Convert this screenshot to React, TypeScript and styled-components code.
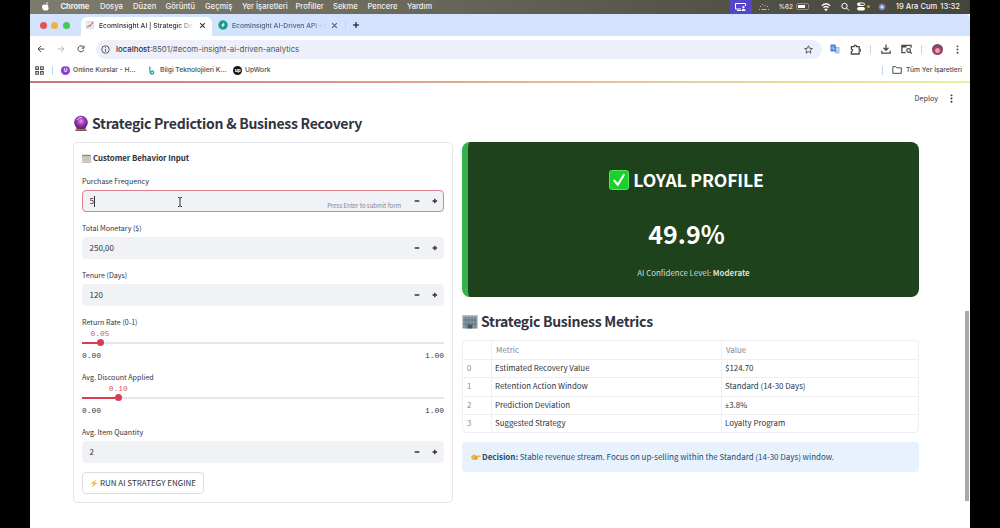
import { ReactNode } from "react";
import styled, { createGlobalStyle } from "styled-components";

const GlobalStyle = createGlobalStyle`
  * {
    box-sizing: border-box;
  }

  body {
    margin: 0;
    background: #000;
    overflow: hidden;
  }
`;

const uiFont = `Inter, "Liberation Sans", sans-serif`;
const appFont = `"Noto Sans CJK SC", "Noto Sans", sans-serif`;
const monoFont = `"Liberation Mono", monospace`;

const Screen = styled.div`
  width: 940px;
  height: 528px;
  margin: 0 30px;
  display: flex;
  flex-direction: column;
  background: #fff;
  font-family: ${uiFont};
  white-space: nowrap;
  overflow: hidden;
`;

const Text = styled.span<{ $width?: number; $spacing?: number }>`
  flex: none;
  width: ${({ $width }) => ($width ? `${$width}px` : "auto")};
  letter-spacing: ${({ $spacing }) => $spacing ?? 0}px;
`;

/* system menu bar */

const MenuBar = styled.div`
  height: 14px;
  flex: none;
  display: flex;
  align-items: center;
  padding: 0 10px 1px 12px;
  background: linear-gradient(90deg, #7d7b6e 0%, #6d6c5e 35%, #57574b 65%, #44453c 100%);
  color: #f2f2ee;
  font-size: 7.6px;
  font-weight: 500;
`;

const AppName = styled(Text)`
  font-weight: 700;
`;

const StatusArea = styled.div`
  margin-left: auto;
  display: flex;
  align-items: center;
  height: 14px;
`;

const ScreenShare = styled.div`
  width: 22px;
  height: 14px;
  margin-right: 7px;
  display: flex;
  align-items: center;
  justify-content: center;
  background: #5546c8;
`;

const Percent = styled(Text)`
  font-size: 6.4px;
`;

const Battery = styled.div`
  width: 13px;
  height: 7px;
  margin: 0 12px 0 3px;
  padding: 1px;
  border: 1px solid #8b8b83;
  border-radius: 2px;

  &::before {
    content: "";
    display: block;
    width: 7px;
    height: 100%;
    background: #fff;
  }
`;

const OrangeDot = styled.i`
  width: 3px;
  height: 3px;
  margin: 0 8px 0 2px;
  border-radius: 50%;
  background: #e08d28;
`;

const Siri = styled.i`
  width: 8px;
  height: 8px;
  margin-right: 10px;
  border-radius: 50%;
  background: radial-gradient(circle, #fff 5%, #58b9d8 30%, #a34674 60%, #26303c 85%);
`;

/* browser window */

const TabStrip = styled.div`
  height: 22px;
  flex: none;
  display: flex;
  align-items: flex-end;
  padding-left: 10px;
  background: #d3e3fd;
  border-radius: 0 5px 0 0;
`;

const Lights = styled.div`
  display: flex;
  gap: 4.4px;
  width: 41px;
  height: 22px;
  align-items: center;
`;

const Light = styled.i<{ $color: string }>`
  width: 7px;
  height: 7px;
  border-radius: 50%;
  background: ${({ $color }) => $color};
`;

const Tab = styled.div<{ $active?: boolean }>`
  width: ${({ $active }) => ($active ? 131 : 133)}px;
  height: 19px;
  display: flex;
  align-items: center;
  padding: 0 6px 3px ${({ $active }) => ($active ? 5 : 6)}px;
  gap: ${({ $active }) => ($active ? 5 : 4)}px;
  border-radius: 6px 6px 0 0;
  background: ${({ $active }) => ($active ? "#fff" : "transparent")};
  color: ${({ $active }) => ($active ? "#303238" : "#52617a")};
  font-size: 6.75px;
  font-weight: 500;
`;

const TabTitle = styled.span<{ $width: number }>`
  width: ${({ $width }) => $width}px;
  mask-image: linear-gradient(90deg, #000 84%, transparent);
`;

const TabEnd = styled.div`
  height: 22px;
  display: flex;
  align-items: center;
  gap: 6px;
`;

const Divider = styled.i<{ $height?: number }>`
  width: 1px;
  height: ${({ $height }) => $height ?? 9}px;
  background: #c3d5f1;
`;

const Toolbar = styled.div`
  height: 26px;
  flex: none;
  display: flex;
  align-items: center;
  padding: 0 8px 0 7px;
  color: #46484c;
`;

const NavButtons = styled.div`
  display: flex;
  gap: 12px;
  width: 60px;
`;

const Omnibox = styled.div`
  width: 726px;
  margin-left: -1px;
  height: 19px;
  display: flex;
  align-items: center;
  padding: 0 9px 0 5px;
  gap: 6px;
  border-radius: 10px;
  background: #edf0fa;
  color: #52555b;
  font-size: 7.82px;

  b {
    font-weight: 500;
    color: #2b2d31;
  }

  svg:last-child {
    margin-left: auto;
  }
`;

const Extensions = styled.div`
  margin-left: auto;
  display: flex;
  align-items: center;
  gap: 10px;
`;

const Avatar = styled.i`
  width: 11px;
  height: 11px;
  border-radius: 50%;
  background: radial-gradient(circle at 50% 60%, #e7a3ae 0 22%, #b43c57 35%, #66516c 70%);
`;

const Bookmarks = styled.div`
  height: 19px;
  flex: none;
  display: flex;
  align-items: center;
  padding: 0 8px 3px 5px;
  color: #4a4c50;
  font-size: 6.7px;
  font-weight: 500;
`;

const Bookmark = styled.div<{ $width: number }>`
  width: ${({ $width }) => $width}px;
  display: flex;
  align-items: center;
  gap: 3px;
`;

const Badge = styled.i<{ $color: string }>`
  width: 9px;
  height: 9px;
  flex: none;
  border-radius: 50%;
  background: ${({ $color }) => $color};
  color: #fff;
  font: 700 5px/9px ${uiFont};
  text-align: center;
  letter-spacing: -0.4px;
`;

const AllBookmarks = styled.div`
  margin-left: auto;
  display: flex;
  align-items: center;
  gap: 4px;
`;

/* dashboard */

const Decoration = styled.div`
  height: 2px;
  flex: none;
  background: linear-gradient(90deg, #c9747c 0%, #dc9a88 35%, #e8c79c 65%, #eaf0a0 100%);
`;

const Page = styled.main`
  flex: 1;
  display: flex;
  font-family: ${appFont};
  color: #31333f;
  background: #fff;
`;

const Content = styled.div`
  width: 846px;
  margin-left: 43px;
  display: flex;
  flex-direction: column;
`;

const DeployBar = styled.div`
  height: 31px;
  width: 883px;
  padding-bottom: 1px;
  display: flex;
  align-items: center;
  justify-content: flex-end;
  gap: 9px;
  font-size: 7.2px;
`;

const Heading = styled.h3`
  margin: 0;
  height: 20px;
  padding-bottom: 2px;
  display: flex;
  align-items: center;
  gap: 3px;
  font-size: 14px;
  line-height: 18px;
  font-weight: 600;
`;

const Columns = styled.div`
  display: flex;
  gap: 9px;
  margin-top: 8px;
`;

const Form = styled.form`
  width: 380px;
  height: 361px;
  flex: none;
  display: flex;
  flex-direction: column;
  gap: 9px;
  padding: 8px;
  border: 1px solid #e4e5e9;
  border-radius: 5px;
`;

const FormTitle = styled.div`
  height: 14px;
  display: flex;
  align-items: center;
  gap: 2px;
  font-size: 7.9px;
  line-height: 14px;
  font-weight: 700;
`;

const Label = styled.div`
  height: 14px;
  font-size: 7.1px;
  line-height: 14px;
`;

const InputBox = styled.div<{ $focused?: boolean }>`
  height: 22px;
  margin-top: 2px;
  display: flex;
  align-items: center;
  padding: 0 4px 0 6.5px;
  border: 1px solid ${({ $focused }) => ($focused ? "#db7f8e" : "#f0f2f6")};
  border-radius: 4px;
  background: #f0f2f6;
  font-size: 8px;
  line-height: 20px;
`;

const Caret = styled.i`
  width: 1px;
  height: 11px;
  background: #31333f;
`;

const IBeam = styled.svg`
  margin: 2px 0 0 82px;
`;

const Hint = styled.span`
  margin: 9px 12px 0 auto;
  color: #84868e;
  font-size: 6px;
  letter-spacing: -0.02px;
  line-height: 10px;
`;

const Steppers = styled.svg<{ $push?: boolean }>`
  flex: none;
  margin-left: ${({ $push }) => ($push ? "auto" : 0)};
`;

const SliderField = styled.div`
  height: 46px;
`;

const Thumb = styled.div`
  width: 20px;
  margin-left: -10px;
  height: 9px;
  color: #d6536a;
  font: 7.9px/9px ${monoFont};
  text-align: center;
`;

const Track = styled.div`
  height: 9px;
  display: flex;
  align-items: center;

  &::after {
    content: "";
    flex: 1;
    height: 2px;
    background: #e4e6ec;
  }
`;

const Fill = styled.i`
  height: 2px;
  display: flex;
  align-items: center;
  justify-content: flex-end;
  background: #dc3c50;

  &::after {
    content: "";
    width: 7px;
    height: 7px;
    flex: none;
    margin-right: -3.5px;
    border-radius: 50%;
    background: #dc3c50;
    z-index: 1;
  }
`;

const Range = styled.div`
  display: flex;
  justify-content: space-between;
  margin-top: 3px;
  font: 7.9px/12px ${monoFont};
`;

const RunButton = styled.button`
  width: 122px;
  height: 22px;
  padding: 0;
  display: flex;
  align-items: center;
  justify-content: center;
  gap: 2px;
  border: 1px solid #dcdde1;
  border-radius: 4px;
  background: #fff;
  color: #31333f;
  font: 8px/20px ${appFont};
`;

const Results = styled.div`
  width: 457px;
  display: flex;
  flex-direction: column;
`;

const ProfileCard = styled.div`
  height: 155px;
  padding-top: 24px;
  display: flex;
  flex-direction: column;
  align-items: center;
  border-left: 6px solid #35b24a;
  border-radius: 8px;
  background: #1e421b;
  color: #fff;
`;

const ProfileName = styled.div`
  height: 28px;
  margin-right: 14px;
  display: flex;
  align-items: center;
  gap: 4px;
  font-size: 17.6px;
  line-height: 28px;
  font-weight: 600;
`;

const Score = styled.div`
  margin: 21px 14px 0 0;
  font-size: 25px;
  line-height: 36px;
  font-weight: 700;
`;

const Confidence = styled.div`
  margin-top: 15px;
  color: #d6dfd5;
  font-size: 7.9px;
  line-height: 14px;
`;

const MetricsHeading = styled(Heading)`
  margin-top: 15px;
`;

const Table = styled.div`
  height: 93px;
  margin-top: 8px;
  display: grid;
  grid-template-rows: repeat(5, 1fr);
  border: 1px solid #eeeff2;
  border-radius: 4px;
`;

const Row = styled.div<{ $head?: boolean }>`
  display: grid;
  grid-template-columns: 28px 230px 1fr;
  align-items: center;
  color: ${({ $head }) => ($head ? "#868890" : "#31333f")};
  font-size: 7.9px;
  line-height: 17px;
  border-top: ${({ $head }) => ($head ? 0 : 1)}px solid #eeeff2;

  span {
    height: 100%;
    padding-left: ${({ $head }) => ($head ? 4 : 3)}px;
    border-left: 1px solid #eeeff2;
    line-height: ${({ $head }) => ($head ? 18 : 16.5)}px;
  }

  span:first-child {
    padding-left: 4px;
    border-left: 0;
    color: #8b8d95;
  }
`;

const Sign = styled.i`
  font-family: "Open Sans", sans-serif;
  font-style: normal;
  font-size: 7.2px;
  line-height: 1;
`;

const Info = styled.div`
  height: 30px;
  margin-top: 9px;
  padding-left: 9px;
  display: flex;
  align-items: center;
  gap: 1px;
  border-radius: 4px;
  background: #e7f2fc;
  color: #1d4a73;
  font-size: 7.98px;
  line-height: 14px;
`;

const Scrollbar = styled.div`
  width: 4px;
  height: 190px;
  margin: 228px 1px 0 auto;
  background: #a9a9ab;
`;

function Icon({ size = 10, width = 1.2, children }: { size?: number; width?: number; children: ReactNode }) {
  return (
    <svg
      width={size}
      height={size}
      viewBox="0 0 12 12"
      fill="none"
      stroke="currentColor"
      strokeWidth={width}
      style={{ flex: "none" }}
    >
      {children}
    </svg>
  );
}

function CloseIcon() {
  return (
    <Icon size={7} width={1.8}>
      <path d="M2 2l8 8M10 2l-8 8" />
    </Icon>
  );
}

function DotsIcon() {
  return (
    <Icon size={9}>
      <g fill="currentColor" stroke="none">
        <circle cx="6" cy="1.8" r="1.3" />
        <circle cx="6" cy="6" r="1.3" />
        <circle cx="6" cy="10.2" r="1.3" />
      </g>
    </Icon>
  );
}

function NumberField({ label, value, focused }: { label: string; value: string; focused?: boolean }) {
  return (
    <div>
      <Label>{label}</Label>
      <InputBox $focused={focused}>
        {value}
        {focused && <Caret />}
        {focused && (
          <IBeam width="6" height="10" viewBox="0 0 6 10" fill="none" stroke="#333">
            <path d="M1 .5h1.3L3 1.2l.7-.7H5M1 9.5h1.3L3 8.8l.7.7H5M3 1v8" />
          </IBeam>
        )}
        {focused && <Hint>Press Enter to submit form</Hint>}
        <Steppers $push={!focused} width="26" height="8" viewBox="0 0 26 8" stroke="#31333f" strokeWidth="1.4">
          <path d="M1.7 4h4.6M19.500 4h4.600M21.800 1.700v4.600" />
        </Steppers>
      </InputBox>
    </div>
  );
}

function Slider({ label, value }: { label: string; value: number }) {
  const position = `${value * 100}%`;
  return (
    <SliderField>
      <Label>{label}</Label>
      <Thumb style={{ transform: `translateX(${value * 362}px)` }}>{value.toFixed(2)}</Thumb>
      <Track>
        <Fill style={{ width: position }} />
      </Track>
      <Range>
        <span>0.00</span>
        <span>1.00</span>
      </Range>
    </SliderField>
  );
}

const menuItems: [string, number][] = [
  ["Dosya", 33],
  ["Düzen", 32.5],
  ["Görüntü", 39.5],
  ["Geçmiş", 37],
  ["Yer İşaretleri", 53.5],
  ["Profiller", 37.5],
  ["Sekme", 34.5],
  ["Pencere", 39.5],
  ["Yardım", 30],
];

const metrics: [string, ReactNode][] = [
  ["Estimated Recovery Value", "$124.70"],
  ["Retention Action Window", "Standard (14-30 Days)"],
  [
    "Prediction Deviation",
    <>
      <Sign>±</Sign>3.8%
    </>,
  ],
  ["Suggested Strategy", "Loyalty Program"],
];

function SystemMenu() {
  return (
    <MenuBar>
      <svg width="18.5" height="9" viewBox="1 0 18.5 9" fill="#fff">
        <path d="M5.2 2.2C5 1.1 5.7.2 6.7 0c.1 1.2-.5 2-1.5 2.2zM7.5 3c-.8.5-.9 2.2.4 2.8C7.500 7.300 6.700 8.500 5.900 8.500c-.6 0-.7-.3-1.300-.3s-.8.3-1.300.3C2 8.500.700 5.900 1.100 4.100c.3-1.400 1.700-1.900 2.800-1.400.6.2.8.2 1.400 0C6.200 2.300 7.100 2.500 7.500 3z" />
      </svg>
      <AppName $width={39.5} $spacing={-0.1}>
        Chrome
      </AppName>
      {menuItems.map(([name, width]) => (
        <Text key={name} $width={width}>
          {name}
        </Text>
      ))}
      <StatusArea>
        <ScreenShare>
          <svg width="11" height="8" viewBox="0 0 11 8" fill="none" stroke="#fff">
            <path d="M6 6H.5V.5h10V3M2 7.500h4" />
            <circle cx="8.500" cy="4.200" r="1.100" fill="#fff" stroke="none" />
            <path d="M6.500 8c0-3 4-3 4 0z" fill="#fff" stroke="none" />
          </svg>
        </ScreenShare>
        <svg width="20" height="8" viewBox="0 0 20 8" fill="#b9b9b1">
          <path d="M0 6h1v1H0zM2.500 6h5v1h-5zM9 6h1v1H9zM1 3h1v1H1zM3 1h1v1H3zM5.500 2h1v1h-1zM8 3h1v1H8z" />
        </svg>
        <Percent $spacing={-0.1}>%62</Percent>
        <Battery />
        <Icon size={10} width={1.7}>
          <path d="M1 4.500c3-2.800 7-2.800 10 0M3 6.800c2-1.800 4-1.800 6 0M5 9l1 1 1-1c-.5-.6-1.500-.6-2 0z" />
        </Icon>
        <svg width="34" height="9" viewBox="0 0 34 9" fill="none" stroke="#fff">
          <circle cx="13.500" cy="4" r="2.700" />
          <path d="M15.500 6l2.500 2.500" />
          <rect x="26.500" y="1" width="7" height="2.500" rx="1.200" />
          <rect x="26.500" y="5.500" width="7" height="2.500" rx="1.200" fill="#fff" />
          <circle cx="28" cy="2.300" r="1" fill="#fff" />
        </svg>
        <OrangeDot />
        <Siri />
        <Text $width={44.5}>19 Ara Cum</Text>
        <Text>13:32</Text>
      </StatusArea>
    </MenuBar>
  );
}

function Browser() {
  return (
    <>
      <TabStrip>
        <Lights>
          <Light $color="#e9505a" />
          <Light $color="#eeb33c" />
          <Light $color="#43cb50" />
        </Lights>
        <Tab $active>
          <svg width="8" height="8" viewBox="0 0 8 8" fill="none">
            <path d="M.5.500h7v7h-7z" fill="#f0eff1" stroke="#c4c0c8" strokeWidth=".5" />
            <path d="M2.500.500v7M5 .500v7M.5 3h7M.5 5.500h7" stroke="#cbd7df" strokeWidth=".4" />
            <path d="M1 6.500l2-2 1 .800L7 1" stroke="#c64757" />
          </svg>
          <TabTitle $width={95}>EcomInsight AI | Strategic De</TabTitle>
          <CloseIcon />
        </Tab>
        <Tab>
          <svg width="10" height="10" viewBox="0 0 10 10" style={{ flex: "none" }}>
            <circle cx="5" cy="5" r="4.700" fill="#159c8a" />
            <path d="M6.700 1.800L3 5.400h1.700L3.500 8.200 7 4.600H5.300z" fill="#fff" />
          </svg>
          <TabTitle $width={95}>EcomInsight AI-Driven API - S</TabTitle>
          <CloseIcon />
        </Tab>
        <TabEnd>
          <Divider />
          <Icon size={8} width={1.5}>
            <path d="M6 1.500v9M1.500 6h9" />
          </Icon>
        </TabEnd>
      </TabStrip>
      <Toolbar>
        <NavButtons>
          <Icon size={8} width={1.5}>
            <path d="M11 6H1.500M6 1.500L1.500 6 6 10.500" />
          </Icon>
          <Icon size={8} width={1.5}>
            <path stroke="#b9babd" d="M1 6h9.500M6 1.500l4.500 4.500L6 10.500" />
          </Icon>
          <Icon size={8} width={1.5}>
            <path d="M10.300 7A4.500 4.500 0 1 1 9.500 3M10.500 1v3.700H6.800" />
          </Icon>
        </NavButtons>
        <Omnibox>
          <Icon size={9} width={1.3}>
            <circle cx="6" cy="6" r="5" />
            <path d="M6 5.500v3.300M6 3v1.300" />
          </Icon>
          <span>
            <b>localhost</b>:8501/#ecom-insight-ai-driven-analytics
          </span>
          <Icon size={9} width={1.3}>
            <path d="M6 1l1.500 3.400 3.700.3-2.800 2.400.9 3.700L6 8.800l-3.300 2 .9-3.700L.8 4.700l3.700-.3z" />
          </Icon>
        </Omnibox>
        <Extensions>
          <svg width="10" height="10" viewBox="0 0 10 10">
            <path d="M4 3h5.500v6.500H5z" fill="#a7bfe3" />
            <path d="M.5.500h5L7 7.500H.5z" fill="#467fe0" />
            <path d="M4.300 3.200a1.300 1.300 0 1 0 .2 1.300H3.300M6 5h2.500M7.200 4.500C7 6 6.500 7 5.800 7.500M6.500 6l1.500 1.700" fill="none" stroke="#fff" strokeWidth=".6" />
          </svg>
          <Icon size={11} width={1.4}>
            <path d="M1.500 2.800h3c-.2-2.200 2.700-2.200 2.500 0h3v2.900c1.900 0 1.900 2.200 0 2.200v3H1.500V8.200c1.800 0 1.800-2.500 0-2.500z" />
          </Icon>
          <Divider style={{ marginLeft: -1 }} />
          <Icon size={10} width={1.5}>
            <path d="M6 .500v7M3 4.500l3 3 3-3M1 8v3h10V8" />
          </Icon>
          <Icon size={11} width={1.4}>
            <path d="M5 9.500H1v-8h10v2.500M1 3h5" />
            <circle cx="8.300" cy="7" r="2" />
            <path d="M9.800 8.500l2 2" />
          </Icon>
          <Divider style={{ marginLeft: -1 }} />
          <Avatar />
          <DotsIcon />
        </Extensions>
      </Toolbar>
      <Bookmarks>
        <Icon size={9} width={1.4}>
          <path d="M1 1h3.500v3.500H1zM7.500 1H11v3.500H7.500zM1 7.500h3.500V11H1zM7.500 7.500H11V11H7.500z" />
        </Icon>
        <Divider style={{ margin: "0 8px" }} />
        <Bookmark $width={87}>
          <Badge $color="#9436d5">Û</Badge>
          <Text>Online Kurslar - H...</Text>
        </Bookmark>
        <Bookmark $width={85}>
          <svg width="9" height="9" viewBox="1 0 9 9" fill="none">
            <path d="M2.500.500l.5 5c.2 3.500 4.200 3 3.500.5-.6-1.800-3-1-2.500.800" stroke="#28a9a5" strokeWidth="1.300" />
            <path d="M2.500 1l1.500 1.800" stroke="#68c5bf" />
          </svg>
          <Text>Bilgi Teknolojileri K...</Text>
        </Bookmark>
        <Bookmark $width={60}>
          <Badge $color="#151515">up</Badge>
          <Text>UpWork</Text>
        </Bookmark>
        <AllBookmarks>
          <Divider style={{ marginRight: 5 }} />
          <Icon size={10} width={1.2}>
            <path d="M1 2h3.500L6 3.500h5.200V10H1z" />
          </Icon>
          <Text>Tüm Yer İşaretleri</Text>
        </AllBookmarks>
      </Bookmarks>
    </>
  );
}

function BehaviorForm() {
  return (
    <Form>
      <FormTitle>
        <svg width="9" height="9" viewBox="0 0 9 9">
          <path d="M.5 1h8v7.500h-8z" fill="#d6d1cf" stroke="#aaa29e" strokeWidth=".6" />
          <path d="M.5 1h8v1.200h-8z" fill="#8c8583" />
          <path d="M2 3.800h5M2 5.300h5M2 6.800h5" stroke="#b5afac" strokeWidth=".6" />
        </svg>
        <Text $spacing={-0.05}>Customer Behavior Input</Text>
      </FormTitle>
      <NumberField label="Purchase Frequency" value="5" focused />
      <NumberField label="Total Monetary ($)" value="250,00" />
      <NumberField label="Tenure (Days)" value="120" />
      <Slider label="Return Rate (0-1)" value={0.05} />
      <Slider label="Avg. Discount Applied" value={0.1} />
      <NumberField label="Avg. Item Quantity" value="2" />
      <RunButton type="button">
        <svg width="8" height="9" viewBox="0 0 8 9">
          <path d="M6.500.300L.5 4.800l2.800.3L1.300 8.700l6.200-4.800-2.800-.3z" fill="#f2c64b" />
        </svg>
        <Text>RUN AI STRATEGY ENGINE</Text>
      </RunButton>
    </Form>
  );
}

function MetricsTable() {
  return (
    <Table>
      <Row $head>
        <span />
        <span>Metric</span>
        <span>Value</span>
      </Row>
      {metrics.map(([metric, value], index) => (
        <Row key={index}>
          <span>{index}</span>
          <span>{metric}</span>
          <span>{value}</span>
        </Row>
      ))}
    </Table>
  );
}

export default function App() {
  return (
    <Screen>
      <GlobalStyle />
      <SystemMenu />
      <Browser />
      <Decoration />
      <Page>
        <Content>
          <DeployBar>
            <Text>Deploy</Text>
            <DotsIcon />
          </DeployBar>
          <Heading>
            <svg width="16" height="17" viewBox="0 0 16 17">
              <defs>
                <radialGradient id="orb" cx=".5" cy=".4">
                  <stop offset="0" stopColor="#e9a0ee" />
                  <stop offset=".45" stopColor="#ab45bd" />
                  <stop offset="1" stopColor="#642383" />
                </radialGradient>
              </defs>
              <path d="M3.500 12h9l1.500 4H2z" fill="#c08b62" />
              <path d="M4 13.500h8M3 15.300h10" stroke="#704936" />
              <circle cx="8" cy="7.500" r="6.800" fill="url(#orb)" />
              <path d="M4 5c1-2 3-2.800 5-2.500" fill="none" stroke="#f6d0f6" />
            </svg>
            <Text $spacing={-0.26}>Strategic Prediction &amp; Business Recovery</Text>
          </Heading>
          <Columns>
            <BehaviorForm />
            <Results>
              <ProfileCard>
                <ProfileName>
                  <svg width="20" height="20" viewBox="0 0 21 21">
                    <rect x=".5" y=".5" width="20" height="20" rx="2.500" fill="#16d22b" stroke="#65e55e" />
                    <path d="M5 10.500l4.300 5L16 4.500" fill="none" stroke="#fff" strokeWidth="2.200" />
                  </svg>
                  <Text $spacing={-0.15}>LOYAL PROFILE</Text>
                </ProfileName>
                <Score>49.9%</Score>
                <Confidence>
                  AI Confidence Level: <b>Moderate</b>
                </Confidence>
              </ProfileCard>
              <MetricsHeading>
                <svg width="16" height="15" viewBox="0 0 16 15">
                  <path d="M.5 1h15v13.500H.5z" fill="#8d9ca5" />
                  <path d="M.5 1h15v1.500H.5z" fill="#bcc3c6" />
                  <path d="M4 2.500v12M7 2.500v8M10 2.500v8M13 2.500v12M1 6h14M1 10h14" stroke="#607783" />
                  <path d="M5.500 10.500h5v4h-5z" fill="#405664" />
                </svg>
                <Text $spacing={-0.27}>Strategic Business Metrics</Text>
              </MetricsHeading>
              <MetricsTable />
              <Info>
                <svg width="10" height="8" viewBox="0 0 10 8">
                  <path d="M.3 3l3-1.700L5 2.500h4c1.200 0 1.200 1.500 0 1.500H6.500c.8.5.6 1.200 0 1.500.2.900-.5 1.500-1.500 1.500H2.500L.3 6z" fill="#efb63d" />
                  <path d="M4 4h2.500M4 5.500h2.300" stroke="#bd822b" strokeWidth=".5" />
                </svg>
                <Text>
                  <b>Decision:</b> Stable revenue stream. Focus on up-selling within the Standard (14-30 Days) window.
                </Text>
              </Info>
            </Results>
          </Columns>
        </Content>
        <Scrollbar />
      </Page>
    </Screen>
  );
}
